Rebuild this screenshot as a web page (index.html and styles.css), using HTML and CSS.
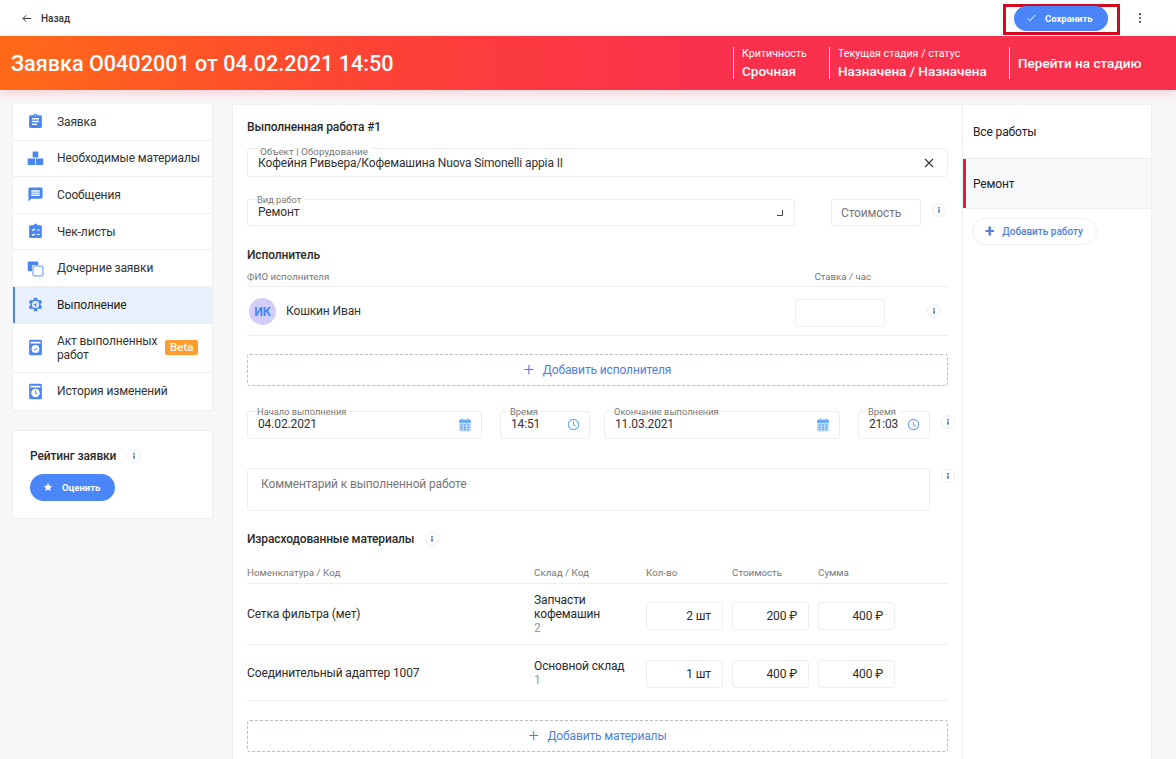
FILE: index.html
```html
<!DOCTYPE html>
<html lang="ru">
<head>
    <meta charset="UTF-8">
    <title>Заявка O0402001</title>
    <link rel="stylesheet" href="styles.css">
</head>
<body>

<svg class="sprite" xmlns="http://www.w3.org/2000/svg">
    <symbol id="i-doc" viewBox="0 0 24 24"><path d="M19 3h-4.18C14.4 1.84 13.3 1 12 1c-1.3 0-2.4.84-2.82 2H5c-1.1 0-2 .9-2 2v14c0 1.1.9 2 2 2h14c1.1 0 2-.9 2-2V5c0-1.1-.9-2-2-2zm-7 0c.55 0 1 .45 1 1s-.45 1-1 1-1-.45-1-1 .45-1 1-1zm2 14H7v-2h7v2zm3-4H7v-2h10v2zm0-4H7V7h10v2z"/></symbol>
    <symbol id="i-boxes" viewBox="0 0 24 24"><path d="M8 2h8v8.5H8zM1 12h10.5v9H2a1 1 0 0 1-1-1zM12.5 12H23v8a1 1 0 0 1-1 1h-9.5z"/></symbol>
    <symbol id="i-msg" viewBox="0 0 24 24"><path d="M20 2H4c-1.1 0-1.99.9-1.99 2L2 22l4-4h14c1.1 0 2-.9 2-2V4c0-1.1-.9-2-2-2zm-2 12H6v-2h12v2zm0-3H6V9h12v2zm0-3H6V6h12v2z"/></symbol>
    <symbol id="i-check" viewBox="0 0 24 24"><path fill-rule="evenodd" d="M19 3h-4.18C14.4 1.84 13.3 1 12 1c-1.3 0-2.4.84-2.82 2H5c-1.1 0-2 .9-2 2v14c0 1.1.9 2 2 2h14c1.1 0 2-.9 2-2V5c0-1.1-.9-2-2-2zM6.5 9.5l1-1 1.2 1.2 2.3-2.3 1 1-3.3 3.3zm0 7l1-1 1.2 1.2 2.3-2.3 1 1-3.3 3.3zM14 9h4v1.5h-4zm0 6.5h4V17h-4z"/></symbol>
    <symbol id="i-child" viewBox="0 0 24 24"><path d="M3 2h11a2 2 0 0 1 2 2v3H9a2 2 0 0 0-2 2v7H3a2 2 0 0 1-2-2V4a2 2 0 0 1 2-2z"/><rect x="8.5" y="8.5" width="14" height="14" rx="1.5" fill="#fff" stroke="currentColor" stroke-width="1.3"/></symbol>
    <symbol id="i-gear" viewBox="0 0 24 24"><path fill-rule="evenodd" d="M19.14 12.94c.04-.3.06-.61.06-.94 0-.32-.02-.64-.07-.94l2.03-1.58c.18-.14.23-.41.12-.61l-1.92-3.32c-.12-.22-.37-.29-.59-.22l-2.39.96c-.5-.38-1.03-.7-1.62-.94l-.36-2.54c-.04-.24-.24-.41-.48-.41h-3.84c-.24 0-.43.17-.47.41l-.36 2.54c-.59.24-1.13.57-1.62.94l-2.39-.96c-.22-.08-.47 0-.59.22L2.74 8.87c-.12.21-.08.47.12.61l2.03 1.58c-.05.3-.09.63-.09.94s.02.64.07.94l-2.03 1.58c-.18.14-.23.41-.12.61l1.92 3.32c.12.22.37.29.59.22l2.39-.96c.5.38 1.03.7 1.62.94l.36 2.54c.05.24.24.41.48.41h3.84c.24 0 .44-.17.47-.41l.36-2.54c.59-.24 1.13-.56 1.62-.94l2.39.96c.22.08.47 0 .59-.22l1.92-3.32c.12-.22.07-.47-.12-.61l-2.01-1.58zM12 17a5 5 0 1 1 0-10 5 5 0 0 1 0 10z"/><path d="M9.5 10.5l2.5 1 1.5-2 1 1-1.5 2 .5 2-2 .5-.5-2-2-1z"/></symbol>
    <symbol id="i-act" viewBox="0 0 24 24"><path fill-rule="evenodd" d="M5 1h14a2 2 0 0 1 2 2v18a2 2 0 0 1-2 2H5a2 2 0 0 1-2-2V3a2 2 0 0 1 2-2zm0 3v2.5h14V4zm7 4.5a5.5 5.5 0 1 0 0 11 5.5 5.5 0 0 0 0-11z"/><path d="M9.5 14l1.8 1.8 3.2-3.2" fill="none" stroke="currentColor" stroke-width="1.4"/></symbol>
    <symbol id="i-hist" viewBox="0 0 24 24"><path fill-rule="evenodd" d="M5 1h14a2 2 0 0 1 2 2v18a2 2 0 0 1-2 2H5a2 2 0 0 1-2-2V3a2 2 0 0 1 2-2zm0 3v2.5h14V4zm7 4a6 6 0 1 0 0 12 6 6 0 0 0 0-12z"/><path d="M12 10.5V14l2.5 1.5" fill="none" stroke="currentColor" stroke-width="1.5"/></symbol>
    <symbol id="i-cal" viewBox="0 0 24 24"><rect x="2" y="3" width="20" height="20" rx="1.5" opacity=".4"/><path d="M2 4.500A1.500 1.500 0 0 1 3.500 3H6V1h2v2h8V1h2v2h2.500A1.500 1.500 0 0 1 22 4.500V8H2z"/><path d="M4.500 10.500h3.500v2.500H4.500zM10.200 10.500h3.500v2.500h-3.500zM16 10.500h3.500v2.500H16zM4.500 14.500h3.500V17H4.500zM10.200 14.500h3.500V17h-3.500zM16 14.500h3.500V17H16zM4.500 18.500h3.500V21H4.500zM10.200 18.500h3.500V21h-3.500zM16 18.500h3.500V21H16z"/></symbol>
    <symbol id="i-clock" viewBox="0 0 24 24"><circle cx="12" cy="12" r="9.5" fill="none" stroke="currentColor" stroke-width="2"/><path d="M12 6.500V12.500l4 2.300" fill="none" stroke="currentColor" stroke-width="2"/></symbol>
    <symbol id="i-info" viewBox="0 0 14 14"><circle cx="7" cy="7" r="6.5" fill="#fff" stroke="#e8eef7"/><rect x="6.200" y="4" width="1.600" height="1.600" fill="#3f72b8"/><rect x="6.200" y="6.500" width="1.600" height="3.200" fill="#3f72b8"/></symbol>
</svg>

<header class="topbar">
    <a class="back">
        <svg class="back-icon" viewBox="0 0 12 10"><path d="M11 5H1.500M5 1.200L1.200 5 5 8.800" fill="none" stroke="#222" stroke-width="1.100"/></svg>
        Назад
    </a>
    <div class="topbar-actions">
        <div class="save-mark">
            <button class="save-btn">
                <svg class="save-icon" viewBox="0 0 12 10"><path d="M1 5.500l3 3 7-7.500" fill="none" stroke="#fff" stroke-width="1.300"/></svg>
                Сохранить
            </button>
        </div>
        <svg class="dots" viewBox="0 0 4 14"><circle cx="2" cy="2.500" r="1.300"/><circle cx="2" cy="7" r="1.300"/><circle cx="2" cy="11.500" r="1.300"/></svg>
    </div>
</header>

<section class="banner">
    <h1>Заявка O0402001 от 04.02.2021 14:50</h1>
    <div class="banner-info">
        <div class="banner-cell cell-crit">
            <span class="banner-label">Критичность</span>
            <span class="banner-value">Срочная</span>
        </div>
        <div class="banner-cell cell-stage">
            <span class="banner-label">Текущая стадия / статус</span>
            <span class="banner-value">Назначена / Назначена</span>
        </div>
        <div class="banner-cell cell-go">
            <span class="banner-link">Перейти на стадию</span>
        </div>
    </div>
</section>

<div class="layout">
    <aside class="sidebar">
        <nav class="nav">
            <a class="nav-item"><svg class="nav-icon"><use href="#i-doc"/></svg>Заявка</a>
            <a class="nav-item"><svg class="nav-icon"><use href="#i-boxes"/></svg>Необходимые материалы</a>
            <a class="nav-item"><svg class="nav-icon"><use href="#i-msg"/></svg>Сообщения</a>
            <a class="nav-item"><svg class="nav-icon"><use href="#i-check"/></svg>Чек-листы</a>
            <a class="nav-item"><svg class="nav-icon"><use href="#i-child"/></svg>Дочерние заявки</a>
            <a class="nav-item active"><svg class="nav-icon"><use href="#i-gear"/></svg>Выполнение</a>
            <a class="nav-item nav-tall"><svg class="nav-icon"><use href="#i-act"/></svg><span class="nav-text">Акт выполненных работ</span><span class="beta">Beta</span></a>
            <a class="nav-item"><svg class="nav-icon"><use href="#i-hist"/></svg>История изменений</a>
        </nav>
        <div class="rating">
            <div class="rating-title">Рейтинг заявки <svg class="info"><use href="#i-info"/></svg></div>
            <button class="rate-btn">
                <svg class="rate-icon" viewBox="0 0 24 24"><path d="M12 2l3 6.900 7.500.7-5.700 4.900 1.700 7.300L12 18l-6.500 3.800 1.700-7.300L1.500 9.600 9 8.900z" fill="#fff"/></svg>
                Оценить
            </button>
        </div>
    </aside>

    <main class="panel">
        <div class="work">
            <h3 class="work-title">Выполненная работа #1</h3>

            <div class="field field-object">
                <label>Объект | Оборудование</label>
                <span class="value">Кофейня Ривьера/Кофемашина Nuova Simonelli appia II</span>
                <svg class="clear" viewBox="0 0 10 10"><path d="M1 1l8 8M9 1L1 9" stroke="#333" stroke-width="1.100"/></svg>
            </div>

            <div class="row row-kind">
                <div class="field field-kind">
                    <label>Вид работ</label>
                    <span class="value">Ремонт</span>
                    <svg class="resize" viewBox="0 0 6 6"><path d="M5.500 0v5.500H0" fill="none" stroke="#444"/></svg>
                </div>
                <div class="field field-cost"><span class="placeholder">Стоимость</span></div>
                <svg class="info info-kind"><use href="#i-info"/></svg>
            </div>

            <h4 class="section-title title-worker">Исполнитель</h4>
            <div class="worker-head">
                <span>ФИО исполнителя</span>
                <span class="worker-rate">Ставка / час</span>
            </div>
            <div class="worker-row">
                <span class="avatar">ИК</span>
                <span class="worker-name">Кошкин Иван</span>
                <div class="field field-rate"></div>
                <svg class="info info-rate"><use href="#i-info"/></svg>
            </div>

            <div class="add-box box-worker"><span class="plus">+</span>Добавить исполнителя</div>

            <div class="row row-dates">
                <div class="field field-date">
                    <label>Начало выполнения</label>
                    <span class="value">04.02.2021</span>
                    <svg class="field-icon icon-cal"><use href="#i-cal"/></svg>
                </div>
                <div class="field field-time">
                    <label>Время</label>
                    <span class="value">14:51</span>
                    <svg class="field-icon icon-clock"><use href="#i-clock"/></svg>
                </div>
                <div class="field field-date2">
                    <label>Окончание выполнения</label>
                    <span class="value">11.03.2021</span>
                    <svg class="field-icon icon-cal"><use href="#i-cal"/></svg>
                </div>
                <div class="field field-time2">
                    <label>Время</label>
                    <span class="value">21:03</span>
                    <svg class="field-icon icon-clock"><use href="#i-clock"/></svg>
                </div>
                <svg class="info info-dates"><use href="#i-info"/></svg>
            </div>

            <div class="row row-comment">
                <div class="comment">Комментарий к выполненной работе</div>
                <svg class="info info-comment"><use href="#i-info"/></svg>
            </div>

            <h4 class="section-title title-materials">Израсходованные материалы <svg class="info"><use href="#i-info"/></svg></h4>

            <div class="mat-row mat-head">
                <span class="col-name">Номенклатура / Код</span>
                <span class="col-store">Склад / Код</span>
                <span class="col-num">Кол-во</span>
                <span class="col-num">Стоимость</span>
                <span class="col-num">Сумма</span>
            </div>
            <div class="mat-row mat-one">
                <span class="col-name">Сетка фильтра (мет)</span>
                <span class="col-store">Запчасти кофемашин<small>2</small></span>
                <span class="col-num num-box">2 шт</span>
                <span class="col-num num-box">200 ₽</span>
                <span class="col-num num-box">400 ₽</span>
            </div>
            <div class="mat-row mat-two">
                <span class="col-name">Соединительный адаптер 1007</span>
                <span class="col-store">Основной склад<small>1</small></span>
                <span class="col-num num-box">1 шт</span>
                <span class="col-num num-box">400 ₽</span>
                <span class="col-num num-box">400 ₽</span>
            </div>

            <div class="add-box box-materials"><span class="plus">+</span>Добавить материалы</div>
        </div>

        <div class="works-side">
            <div class="side-item">Все работы</div>
            <div class="side-item selected">Ремонт</div>
            <button class="add-work"><span class="add-work-plus">+</span>Добавить работу</button>
        </div>
    </main>
</div>

</body>
</html>
```

FILE: styles.css
```css
* {
    box-sizing: border-box;
}
html, body {
    height: 759px;
    overflow: hidden;
}
body {
    margin: 0;
    background-color: #f7f7f8;
    color: #2b2b2b;
    font-family: Roboto, "Liberation Sans", sans-serif;
    font-size: 12px;
}
.sprite {
    display: none;
}
button {
    font-family: inherit;
    border: none;
    cursor: pointer;
}
h1, h3, h4 {
    margin: 0;
    font-weight: 500;
}
.nav, .rating-title, .work, .side-item {
    letter-spacing: -0.13px;
}

/* top bar */
.topbar {
    height: 36px;
    background-color: #fff;
    display: flex;
    justify-content: space-between;
    align-items: center;
    padding: 0 34px 0 22px;
}
.back {
    display: flex;
    align-items: center;
    gap: 9px;
    font-size: 10px;
    font-weight: 500;
    color: #333;
}
.back-icon {
    width: 10px;
    height: 9px;
}
.topbar-actions {
    display: flex;
    align-items: center;
    gap: 18px;
}
.save-mark {
    width: 117px;
    height: 31px;
    border: 3px solid #d3091f;
    padding: 0 8px;
    margin-top: 2px;
    display: flex;
    align-items: center;
}
.save-btn {
    width: 94px;
    height: 25px;
    margin-top: -2px;
    border-radius: 13px;
    background-color: #4a86f8;
    color: #fff;
    font-size: 9.5px;
    font-weight: 700;
    display: flex;
    align-items: center;
    padding: 0 0 0 13px;
    gap: 9px;
}
.save-icon {
    width: 9px;
    height: 8px;
}
.dots {
    width: 4px;
    height: 12px;
    fill: #444;
}

/* red banner */
.banner {
    height: 54px;
    background: linear-gradient(90deg, #ff6a17 0%, #fd4037 34%, #f9314d 60%, #f9304c 100%);
    box-shadow: 0 4px 10px rgba(249, 48, 76, 0.18);
    color: #fff;
    display: flex;
    justify-content: space-between;
    align-items: center;
    padding: 0 34px 0 11px;
    position: relative;
}
.banner h1 {
    font-size: 21.6px;
}
.banner-info {
    display: flex;
    height: 32px;
}
.banner-cell {
    border-left: 1px solid rgba(255, 255, 255, 0.85);
    padding-left: 8px;
    display: flex;
    flex-direction: column;
    justify-content: center;
    gap: 3px;
}
.cell-crit {
    width: 96px;
}
.cell-stage {
    width: 180px;
}
.cell-go {
    width: 133px;
}
.banner-label {
    font-size: 10.7px;
    line-height: 13px;
}
.banner-value {
    font-size: 13.5px;
    line-height: 17px;
    font-weight: 500;
}
.banner-link {
    font-size: 13.5px;
    font-weight: 500;
}

/* layout */
.layout {
    display: flex;
    align-items: flex-start;
    gap: 19px;
    padding: 14px 24px 0 12px;
}
.sidebar {
    width: 201px;
    flex: none;
}
.nav {
    background-color: #fff;
    border: 1px solid #eeeff1;
    border-top: none;
}
.nav-item {
    height: 36.6px;
    display: flex;
    align-items: center;
    padding: 0 13px 0 14px;
    border-bottom: 1px solid #edeef0;
    color: #333;
    white-space: nowrap;
}
.nav-item:last-child {
    border-bottom: none;
}
.nav-item.active {
    background-color: #e9f1fd;
    box-shadow: inset 2px 0 0 #4a86f8;
    color: #222;
}
.nav-tall {
    height: 49.6px;
}
.nav-icon {
    width: 17px;
    height: 17px;
    margin-right: 13px;
    color: #4a86f0;
    fill: currentColor;
    flex: none;
}
.nav-text {
    width: 108px;
    line-height: 14px;
    white-space: normal;
}
.beta {
    background-color: #ff9d2e;
    color: #fff;
    font-size: 11.5px;
    letter-spacing: 0;
    font-weight: 500;
    line-height: 15px;
    padding: 0 5px;
    border-radius: 2px;
}
.rating {
    margin-top: 19px;
    height: 89px;
    background-color: #fff;
    border: 1px solid #eeeff1;
    padding: 17px;
}
.rating-title {
    font-weight: 500;
    display: flex;
    align-items: center;
    gap: 11px;
    height: 16px;
}
.info {
    width: 14px;
    height: 14px;
    flex: none;
}
.rate-btn {
    margin-top: 10px;
    width: 85px;
    height: 27px;
    border-radius: 14px;
    background-color: #4a86f8;
    color: #fff;
    font-size: 9.5px;
    font-weight: 700;
    display: flex;
    align-items: center;
    padding: 0 0 0 13px;
    gap: 9px;
}
.rate-icon {
    width: 10px;
    height: 10px;
}

/* main panel */
.panel {
    width: 920px;
    height: 680px;
    background-color: #fff;
    border: 1px solid #eeeff1;
    border-bottom: none;
    display: flex;
}
.work {
    width: 729px;
    flex: none;
    padding: 14px 14px 0;
}
.work-title {
    font-size: 12px;
    line-height: 16px;
}
.section-title {
    font-size: 12px;
    line-height: 16px;
    display: flex;
    align-items: center;
    gap: 11px;
}
.row {
    display: flex;
    align-items: flex-start;
}
.field {
    position: relative;
    height: 28px;
    border: 1px solid #edeef0;
    border-radius: 3px;
    background-color: #fff;
    padding: 5px 10px 0;
    flex: none;
}
.field label {
    position: absolute;
    top: -6px;
    left: 9px;
    padding: 0 3px 0 0;
    background-color: #fff;
    font-size: 9.3px;
    letter-spacing: 0;
    line-height: 11px;
    color: #777;
}
.value {
    line-height: 14px;
    display: block;
    color: #333;
}
.field-object {
    margin-top: 13px;
    height: 29px;
    padding-top: 7px;
}
.field-object label {
    top: -3px;
    left: 12px;
    font-size: 9.9px;
}
.clear {
    position: absolute;
    right: 13px;
    top: 9px;
    width: 10px;
    height: 10px;
}
.resize {
    position: absolute;
    right: 11px;
    top: 10px;
    width: 6px;
    height: 6px;
}
.row-kind {
    margin-top: 22px;
}
.field-kind {
    width: 548px;
    height: 27px;
}
.field-cost {
    width: 90px;
    height: 27px;
    margin-left: 36px;
    padding: 6px 9px 0;
}
.placeholder {
    display: block;
    line-height: 14px;
    color: #777;
}
.info-kind {
    margin-left: 11px;
    margin-top: 4px;
}
.title-worker {
    margin-top: 21px;
}
.worker-head {
    margin-top: 8px;
    height: 16px;
    border-bottom: 1px solid #edeef0;
    font-size: 9.7px;
    letter-spacing: 0;
    line-height: 12px;
    color: #777;
    display: flex;
}
.worker-rate {
    margin-left: auto;
    margin-right: 77px;
}
.worker-row {
    height: 49px;
    border-bottom: 1px solid #edeef0;
    display: flex;
    align-items: center;
    padding-left: 2px;
}
.avatar {
    width: 27px;
    height: 27px;
    border-radius: 50%;
    background-color: #d2cefb;
    color: #4a86f0;
    font-size: 12.5px;
    font-weight: 700;
    display: flex;
    align-items: center;
    justify-content: center;
}
.worker-name {
    margin-left: 10px;
    color: #333;
}
.field-rate {
    width: 90px;
    margin-left: auto;
    margin-top: 4px;
}
.info-rate {
    margin-left: 42px;
    margin-right: 7px;
}
.add-box {
    height: 32px;
    border: 1px dashed #b9bcc1;
    border-radius: 3px;
    display: flex;
    align-items: center;
    justify-content: center;
    color: #4f7fdc;
}
.plus {
    font-size: 18px;
    font-weight: 300;
    margin-right: 9px;
    line-height: 18px;
}
.box-worker {
    margin-top: 18px;
}
.row-dates {
    margin-top: 25px;
}
.field-date {
    width: 235px;
}
.field-time {
    width: 90px;
    margin-left: 18px;
}
.field-date2 {
    width: 236px;
    margin-left: 14px;
}
.field-time2 {
    width: 72px;
    margin-left: 18px;
}
.field-icon {
    position: absolute;
    top: 6px;
    right: 9px;
    width: 14px;
    height: 14px;
    color: #63a8f2;
    fill: currentColor;
}
.icon-clock {
    width: 13px;
    height: 13px;
}
.info-dates {
    margin-left: 11px;
    margin-top: 4px;
}
.row-comment {
    margin-top: 29px;
}
.comment {
    flex: none;
    width: 683px;
    height: 43px;
    border: 1px solid #edeef0;
    border-radius: 3px;
    padding: 8px 13px;
    color: #777;
    line-height: 14px;
}
.info-comment {
    margin-left: 11px;
    margin-top: 1px;
}
.title-materials {
    margin-top: 20px;
}

/* materials table */
.mat-row {
    display: flex;
    align-items: center;
    border-bottom: 1px solid #edeef0;
}
.col-name {
    width: 287px;
    flex: none;
}
.col-store {
    width: 112px;
    flex: none;
    line-height: 14px;
    padding-right: 8px;
}
.col-store small {
    display: block;
    font-size: 12px;
    color: #999;
}
.col-num {
    flex: none;
    width: 86px;
}
.mat-head {
    margin-top: 20px;
    height: 17px;
    align-items: flex-start;
    font-size: 9.8px;
    letter-spacing: 0;
    line-height: 12px;
    color: #777;
}
.mat-head .col-store {
    line-height: 12px;
}
.mat-one {
    height: 61px;
}
.mat-two {
    height: 56px;
}
.num-box {
    width: 77px;
    height: 28px;
    margin: 3px 9px 0 0;
    border: 1px solid #edeef0;
    border-radius: 3px;
    text-align: right;
    padding: 0 11px;
    line-height: 26px;
}
.box-materials {
    margin-top: 19px;
}

/* list of works on the right */
.works-side {
    flex: 1;
    border-left: 1px solid #edeef0;
}
.side-item {
    height: 54px;
    display: flex;
    align-items: center;
    padding-left: 10px;
    border-bottom: 1px solid #edeef0;
    color: #222;
}
.side-item.selected {
    height: 50px;
    background-color: #f8f9fb;
    box-shadow: inset 3px 0 0 #dc1f45;
}
.add-work {
    margin: 9px 0 0 9px;
    width: 125px;
    height: 27px;
    border-radius: 14px;
    border: 1px solid #edeef0;
    background-color: #fff;
    color: #4f7fdc;
    font-size: 10px;
    font-weight: 500;
    display: flex;
    align-items: center;
    padding: 0 0 0 12px;
}
.add-work-plus {
    font-size: 17px;
    font-weight: 700;
    line-height: 17px;
    margin-right: 8px;
}
```
